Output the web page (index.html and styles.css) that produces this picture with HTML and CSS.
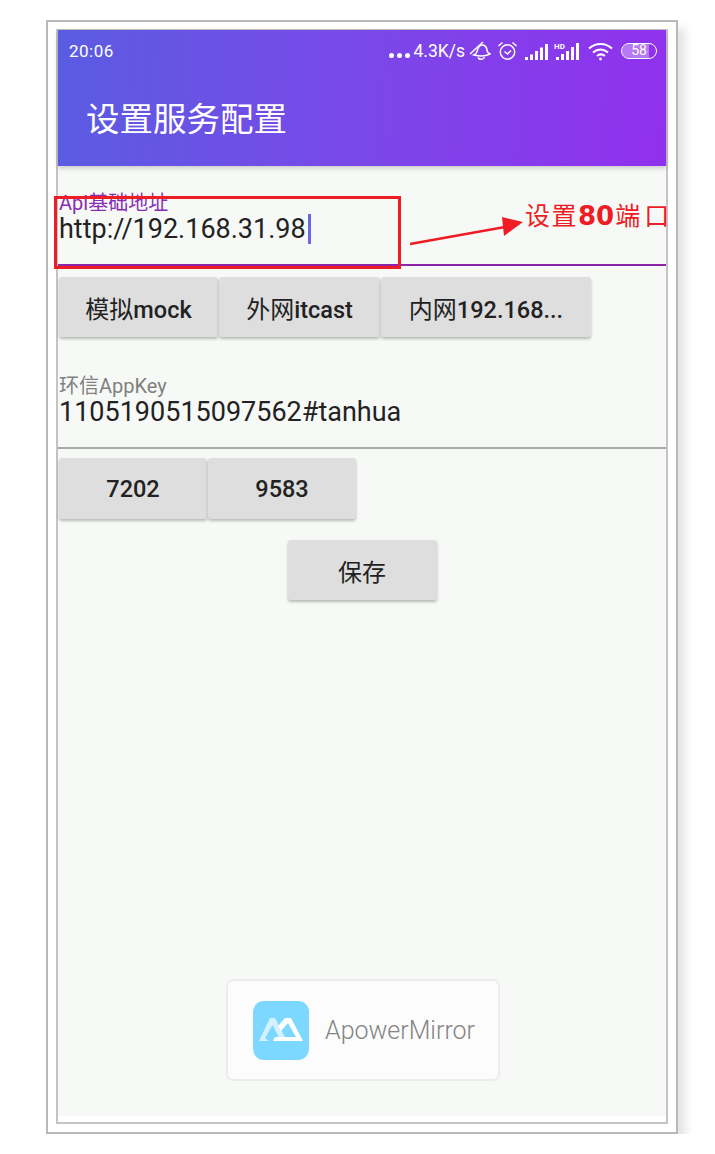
FILE: index.html
```html
<!DOCTYPE html>
<html lang="zh-CN">

<head>
	<meta charset="UTF-8">
	<meta name="viewport" content="width=device-width, initial-scale=1.0">
	<link rel="stylesheet" href="styles.css">
	<title>设置服务配置</title>
</head>

<body>
	<div class="outer-frame">
		<div class="inner-frame">
			<div class="screen">
				<header class="app-header">
					<div class="status-bar">
						<span class="status-time">20:06</span>
						<div class="status-right">
							<span class="status-dots"><i></i><i></i><i></i></span>
							<span class="status-speed">4.3K/s</span>
							<svg class="icon-bell" width="22" height="20" viewBox="0 0 22 20" fill="none" stroke="#fff" stroke-width="1.5">
								<path d="M5 14 C8 13 8 10 9 7.5 C10 4.5 13 3 15.5 4.5 C18 6 18 9 18.5 11 L21 13 C17 15 11 15.5 5 14 Z" />
								<path d="M9 16.5 C10.5 19 14 19 15.5 16" />
								<path d="M1 13 L14 1" />
							</svg>
							<svg class="icon-alarm" width="21" height="20" viewBox="0 0 21 20" fill="none" stroke="#fff" stroke-width="1.5">
								<circle cx="10.5" cy="11" r="7.2" />
								<path d="M7.5 10.5 L10.5 13 L14 9.5" />
								<path d="M1.5 5 L5.5 1.5 M19.5 5 L15.5 1.5" />
							</svg>
							<svg class="icon-signal" width="24" height="17" viewBox="0 0 24 17" fill="#fff">
								<rect x="0" y="14" width="3" height="3" />
								<rect x="5" y="11.5" width="3" height="5.5" />
								<rect x="10" y="8" width="3" height="9" />
								<rect x="15" y="4.5" width="3" height="12.5" />
								<rect x="20" y="1" width="3" height="16" />
							</svg>
							<svg class="icon-signal-hd" width="27" height="18" viewBox="0 0 27 18" fill="#fff">
								<text class="hd-text" x="0" y="7">HD</text>
								<rect x="2" y="15" width="3" height="3" />
								<rect x="7" y="12" width="3" height="6" />
								<rect x="12" y="9" width="3" height="9" />
								<rect x="17" y="5" width="3" height="13" />
								<rect x="22" y="1" width="3" height="17" />
							</svg>
							<svg class="icon-wifi" width="26" height="19" viewBox="0 0 26 19" fill="none" stroke="#fff" stroke-width="2">
								<path d="M1 6.5 C7.5 0.5 17.5 0.5 24 6.5" />
								<path d="M5 10.5 C9.5 6.5 15.5 6.5 20 10.5" />
								<path d="M9 14 C11.5 12 14.5 12 17 14" />
								<circle cx="12.5" cy="17" r="1.4" fill="#fff" stroke="none" />
							</svg>
							<span class="battery"><span class="battery-level"></span><span class="battery-num">58</span></span>
						</div>
					</div>
					<h1 class="app-title">设置服务配置</h1>
				</header>

				<main class="form">
					<section class="field field-active">
						<div class="field-label">Api基础地址</div>
						<div class="field-value">http://192.168.31.98<span class="cursor"></span></div>
					</section>
					<div class="btn-row">
						<button class="btn btn-mock" type="button">模拟<span class="btn-latin">mock</span></button>
						<button class="btn btn-itcast" type="button">外网<span class="btn-latin">itcast</span></button>
						<button class="btn btn-lan" type="button">内网<span class="btn-latin">192.168...</span></button>
					</div>

					<section class="field field-second">
						<div class="field-label">环信AppKey</div>
						<div class="field-value">1105190515097562#tanhua</div>
					</section>
					<div class="btn-row">
						<button class="btn btn-key" type="button"><span class="btn-latin">7202</span></button>
						<button class="btn btn-key" type="button"><span class="btn-latin">9583</span></button>
					</div>

					<div class="save-row">
						<button class="btn btn-save" type="button">保存</button>
					</div>
				</main>

				<div class="watermark">
					<div class="watermark-logo">
						<svg width="44" height="24" viewBox="0 0 44 24">
							<path d="M0 23 L11 0 L16 0 L28 23 L22 23 L13.5 7 L6 20 L10 23 Z" fill="#d5f1ff" />
							<path d="M19 8 L26 0 L32 0 L44 23 L14 23 L16 19 L37 19 L29 5 L22 13 Z" fill="#fff" />
						</svg>
					</div>
					<span class="watermark-name">ApowerMirror</span>
				</div>
			</div>
		</div>

		<!-- пометки поверх скриншота -->
		<div class="note-box"></div>
		<svg class="note-arrow" width="116" height="32" viewBox="0 0 116 32">
			<path d="M1 30 L96 13" stroke="#f01c24" stroke-width="2.5" fill="none" />
			<path d="M93 3 L114 8 L95 22 Z" fill="#f01c24" />
		</svg>
		<div class="note-text"><span class="note-wide">设置</span><b>80</b><span class="note-end">端</span><span class="note-gap">口</span></div>
	</div>
</body>

</html>
```

FILE: styles.css
```css
* {
	box-sizing: border-box;
}

body {
	margin: 0;
	background: #fff;
	font-family: Roboto, "Noto Sans CJK SC", sans-serif;
}

.outer-frame {
	position: relative;
	width: 632px;
	height: 1114px;
	margin: 20px 0 0 46px;
	padding: 7px 8px 8px 8px;
	background: #fff;
	border: 2px solid #b8b8b8;
	box-shadow: 8px 8px 8px rgba(0, 0, 0, 0.1);
}

.inner-frame {
	height: 100%;
	padding: 0 0 6px 0;
	background: #fff;
	border: 2px solid #c4c4c4;
	border-top-width: 1px;
}

.screen {
	display: flex;
	flex-direction: column;
	height: 100%;
	background: #f7f9f7;
}

/* header */
.app-header {
	height: 136px;
	color: #fff;
	background: linear-gradient(95deg, #5a5ce2 0%, #7a48e8 50%, #9130ee 100%);
	box-shadow: 0 2px 5px rgba(0, 0, 0, 0.2);
}

.status-bar {
	display: flex;
	justify-content: space-between;
	align-items: center;
	height: 42px;
	padding: 0 9px 0 11px;
}

.status-time {
	font-size: 17px;
	letter-spacing: 0.5px;
}

.status-right {
	display: flex;
	align-items: center;
}

.status-dots {
	display: flex;
	gap: 3px;
	margin: 9px 3px 0 0;
}

.status-dots i {
	width: 5px;
	height: 5px;
	border-radius: 50%;
	background: #fff;
}

.status-speed {
	font-size: 17.5px;
	margin-right: 4px;
}

.icon-bell {
	margin-right: 6px;
}

.icon-alarm {
	margin-right: 7px;
}

.icon-signal {
	margin-right: 5px;
}

.icon-signal-hd {
	margin-right: 7px;
}

.icon-wifi {
	margin-right: 7px;
}

.hd-text {
	font-size: 8px;
	font-weight: bold;
}

.battery {
	position: relative;
	display: block;
	width: 36px;
	height: 16px;
	border: 1.5px solid #fff;
	border-radius: 8px;
	overflow: hidden;
}

.battery-level {
	position: absolute;
	top: 0;
	left: 0;
	bottom: 0;
	width: 27px;
	background: rgba(255, 255, 255, 0.35);
}

.battery-num {
	position: relative;
	display: block;
	font-size: 14px;
	line-height: 13px;
	text-align: center;
}

.app-title {
	margin: 0;
	padding: 24px 0 0 28px;
	font-size: 33.5px;
	font-weight: 400;
	line-height: 48px;
}

/* form */
.form {
	padding-top: 27px;
}

.field {
	padding-bottom: 20px;
	border-bottom: 2px solid #aaa;
}

.field-active {
	border-bottom-color: #8e24aa;
}

.field-second {
	margin-top: 39px;
}

.field-label {
	padding-left: 1px;
	font-size: 20px;
	line-height: 20px;
	color: #808080;
}

.field-active .field-label {
	color: #8a2db5;
}

.field-value {
	display: flex;
	align-items: center;
	height: 30px;
	margin-top: 1px;
	padding-left: 1px;
	font-size: 27px;
	color: #222;
}

.cursor {
	width: 3px;
	height: 30px;
	margin-left: 2px;
	background: #6a6ae0;
}

.btn-row {
	display: flex;
	gap: 1px;
	margin-top: 11px;
	padding-left: 1px;
}

.field-second + .btn-row {
	margin-top: 9px;
}

.btn {
	height: 60px;
	padding: 0;
	border: none;
	border-radius: 3px;
	font-family: inherit;
	font-size: 24px;
	font-weight: 400;
	color: #222;
	background: #dedede;
	box-shadow: 0 2px 3px rgba(0, 0, 0, 0.25);
}

.btn-latin {
	font-size: 23.5px;
	font-weight: 500;
}

.btn-mock {
	width: 159px;
}

.btn-itcast {
	width: 161px;
}

.btn-lan {
	width: 210px;
}

.btn-key {
	width: 148px;
	height: 61px;
}

.save-row {
	display: flex;
	justify-content: center;
	margin-top: 21px;
}

.btn-save {
	width: 149px;
}

/* watermark */
.watermark {
	display: flex;
	align-items: center;
	width: 274px;
	height: 102px;
	margin: auto 0 35px 168px;
	padding-left: 25px;
	background: #fbfcfb;
	border: 2px solid #ececec;
	border-radius: 7px;
}

.watermark-logo {
	display: flex;
	justify-content: center;
	align-items: center;
	width: 56px;
	height: 59px;
	border-radius: 11px;
	background: #7dd8ff;
}

.watermark-name {
	margin-left: 16px;
	font-size: 25px;
	font-weight: 300;
	color: #858585;
}

/* annotations */
.note-box {
	position: absolute;
	left: 6px;
	top: 174px;
	width: 347px;
	height: 73px;
	border: 3px solid #ee1c25;
}

.note-arrow {
	position: absolute;
	left: 361px;
	top: 192px;
}

.note-text {
	position: absolute;
	left: 477px;
	top: 174px;
	font-family: "Noto Sans CJK SC", sans-serif;
	font-size: 25px;
	line-height: 36px;
	color: #ee1c25;
	white-space: nowrap;
}

.note-text b {
	font-family: "DejaVu Sans", sans-serif;
	font-size: 26px;
	font-weight: 700;
}

.note-wide {
	letter-spacing: 1.5px;
}

.note-end {
	margin-left: 1px;
}

.note-gap {
	margin-left: 4px;
}
```
